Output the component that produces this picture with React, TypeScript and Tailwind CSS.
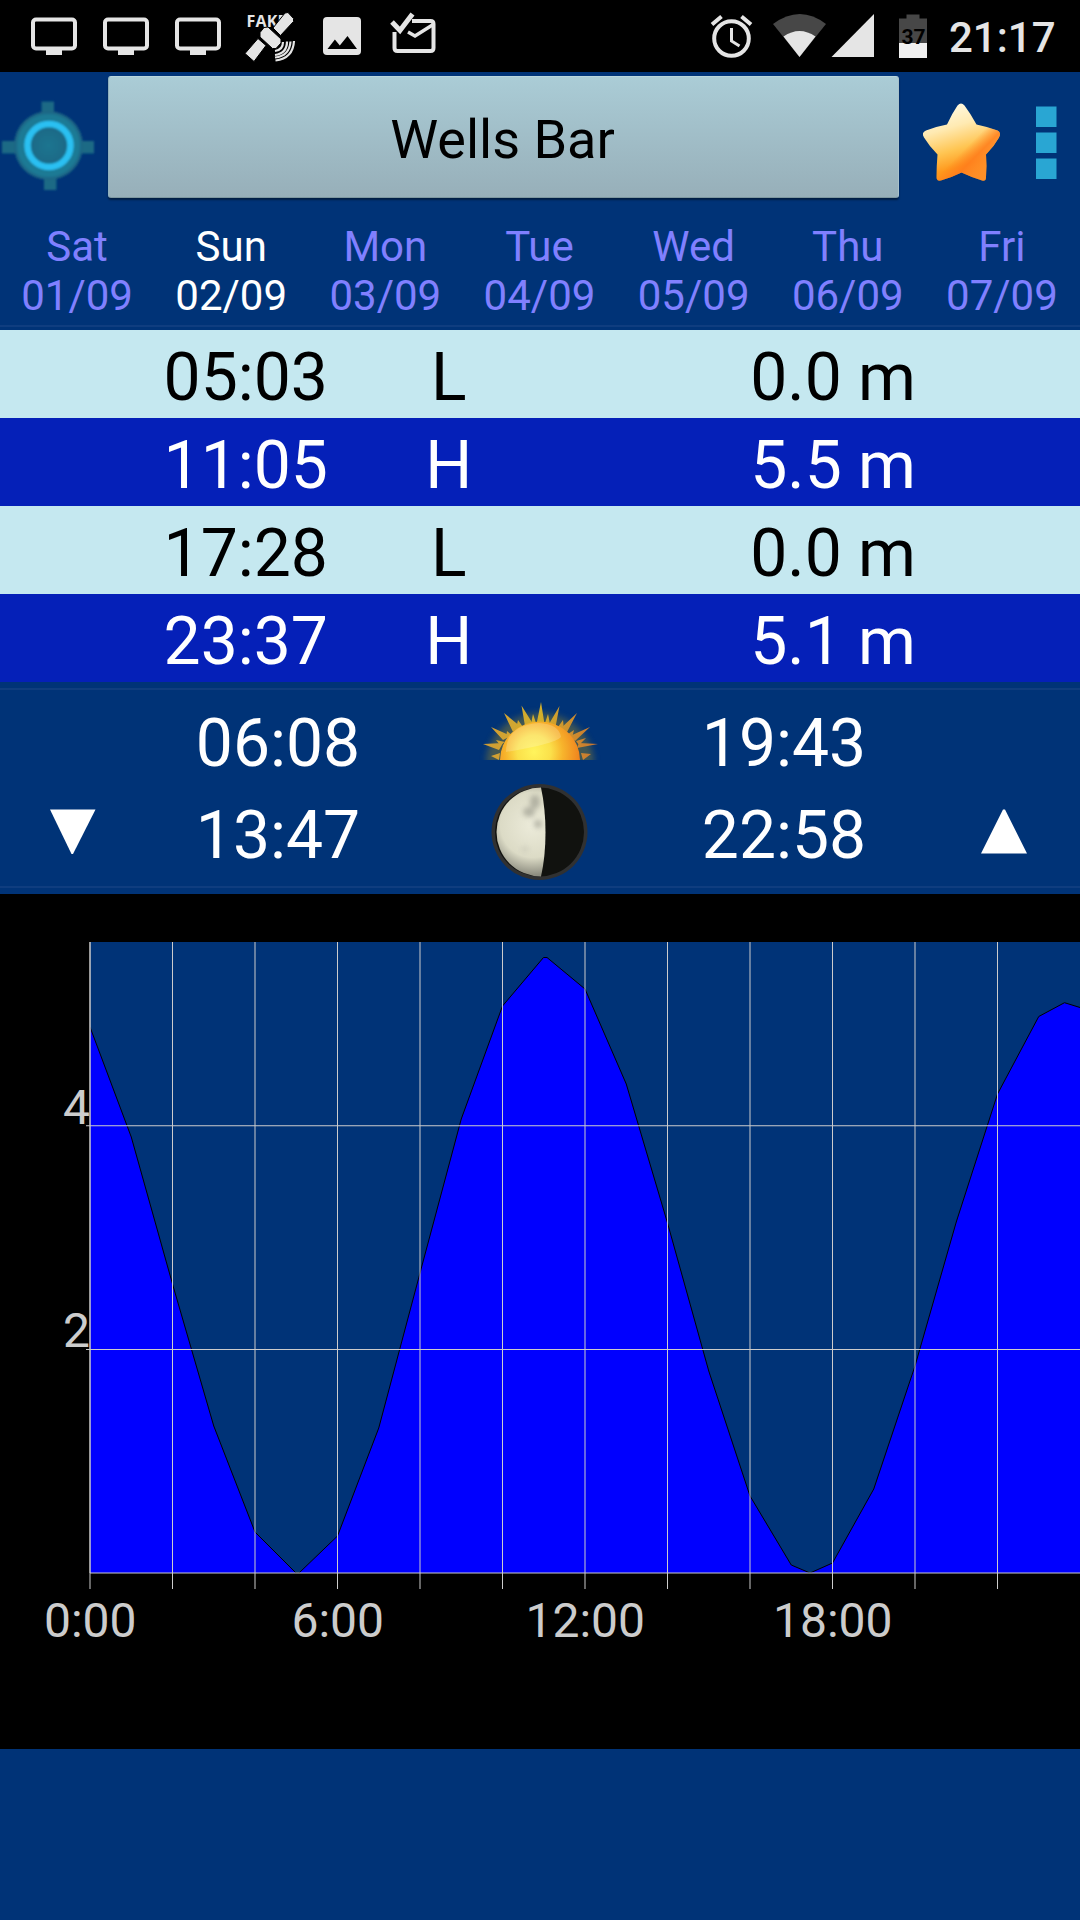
import type { ReactNode } from "react";

interface Day {
  name: string;
  date: string;
}

interface Tide {
  time: string;
  type: "L" | "H";
  height: string;
}

const days: Day[] = [
  { name: "Sat", date: "01/09" },
  { name: "Sun", date: "02/09" },
  { name: "Mon", date: "03/09" },
  { name: "Tue", date: "04/09" },
  { name: "Wed", date: "05/09" },
  { name: "Thu", date: "06/09" },
  { name: "Fri", date: "07/09" },
];

const tides: Tide[] = [
  { time: "05:03", type: "L", height: "0.0 m" },
  { time: "11:05", type: "H", height: "5.5 m" },
  { time: "17:28", type: "L", height: "0.0 m" },
  { time: "23:37", type: "H", height: "5.1 m" },
];

// Tide curve in chart pixels, chart origin is the top left of the black panel
const curve = [
  [90, 133],
  [131.25, 243],
  [172.5, 390],
  [213.75, 532],
  [255, 638],
  [296, 679],
  [299, 679],
  [337.5, 642],
  [378.75, 534],
  [420, 379],
  [461.25, 225],
  [502.5, 112],
  [543.5, 63.5],
  [547, 63.5],
  [585, 95],
  [626.25, 190],
  [667.5, 329],
  [708.75, 477],
  [750, 602],
  [791.25, 671],
  [810, 679],
  [832.5, 669],
  [873.75, 595],
  [915, 472],
  [956.25, 328],
  [997.5, 200],
  [1038.75, 122.5],
  [1064.5, 108.7],
  [1080, 113.5],
];

const StatusIcon = ({ children }: { children: ReactNode }) => (
  <svg width="72" height="72" viewBox="0 0 72 72" fill="none">
    {children}
  </svg>
);

const MonitorIcon = () => (
  <StatusIcon>
    <rect x="15" y="19.5" width="42" height="29" rx="3" stroke="#e5e5e5" strokeWidth="4" />
    <path d="M28 49h16v6H28z" fill="#e5e5e5" />
  </StatusIcon>
);

const SatelliteIcon = () => (
  <StatusIcon>
    <text
      x="12.5"
      y="26.5"
      className="font-['Open_Sans',sans-serif] text-[16px] font-bold"
      textLength="40"
      fill="#e5e5e5"
    >
      FAKE
    </text>
    <g stroke="#000" strokeWidth="1" strokeLinejoin="round" fill="#e5e5e5">
      <path d="M51 13l3-.500 5.500 6v3L46.500 35.500 39 28z" />
      <path d="M24 38.500l8 7L20 61.500 11 53.500z" />
      <path d="M30 27.500l4-.500 13 12v4l-5 5.500h-3.500L26 37v-4.500z" />
    </g>
    <g stroke="#e5e5e5" strokeWidth="2.2">
      <path d="M49 42q0 8-8 9" />
      <path d="M53 41.500q0 12-12 13.500" />
      <path d="M56.500 41.500q-1 14.500-15.500 16" />
      <path d="M60 41q-1 17.500-18.500 19.500" />
    </g>
  </StatusIcon>
);

const PictureIcon = () => (
  <StatusIcon>
    <rect x="17" y="17" width="38" height="38" rx="4" fill="#e5e5e5" />
    <path d="M21.5 49h29.5L41.5 36l-7.7 9.5-4.9-6z" fill="#000" />
  </StatusIcon>
);

const MailCheckIcon = () => (
  <StatusIcon>
    <path
      d="M34 21h18.500q3 0 3 3v24q0 3-3 3h-33q-3 0-3-3V32"
      stroke="#e5e5e5"
      strokeWidth="4"
    />
    <path d="M14 22l8 8.500L34.500 14" stroke="#e5e5e5" strokeWidth="5" />
    <path d="M30 32l7 4L56 24" stroke="#e5e5e5" strokeWidth="3.500" />
  </StatusIcon>
);

const StatusBar = () => (
  <div className="flex h-[72px] bg-black pl-[18px]">
    <MonitorIcon />
    <MonitorIcon />
    <MonitorIcon />
    <SatelliteIcon />
    <PictureIcon />
    <MailCheckIcon />
    <div className="ml-auto flex">
      {/* alarm */}
      <svg width="60" height="72" viewBox="702 0 60 72" fill="none" stroke="#e5e5e5">
        <circle cx="731.5" cy="38.500" r="17.300" strokeWidth="4" />
        <path d="M731.500 28v13l8 5" strokeWidth="3" />
        <path d="M712 24.500l9.500-8M751 24.500l-9.500-8" strokeWidth="4" />
      </svg>
      {/* wifi */}
      <svg width="66" height="72" viewBox="762 0 66 72">
        <path d="M799.500 57L773 24q27-20 53 0z" fill="#474747" />
        <path d="M799.500 57L783.500 36.500q16-11 32 0z" fill="#e5e5e5" />
      </svg>
      {/* mobile signal */}
      <svg width="56" height="72" viewBox="828 0 56 72">
        <path d="M831.500 57L874 14v43z" fill="#e5e5e5" />
      </svg>
      {/* battery */}
      <svg width="60" height="72" viewBox="884 0 60 72">
        <path d="M899 58V18.500h7.500V14.500h13v4H927V58z" fill="#474747" />
        <path d="M899 43h28v15h-28z" fill="#f0f0f0" />
        <text
          x="913.5"
          y="43.7"
          textAnchor="middle"
          className="font-['Roboto',sans-serif] text-[21px] font-bold"
          fill="#000"
        >
          37
        </text>
      </svg>
      <span className="w-[136px] pl-[5px] pt-1 text-[42px] leading-[68px] font-medium text-[#e5e5e5]">
        21:17
      </span>
    </div>
  </div>
);

const Header = () => (
  <div className="flex h-[138px] items-start">
    <svg width="108" height="138" viewBox="0 72 108 138">
      <defs>
        <radialGradient id="disc">
          <stop offset="0" stopColor="#1f7590" />
          <stop offset="0.5" stopColor="#1b6a87" />
          <stop offset="0.85" stopColor="#1f7d97" />
          <stop offset="1" stopColor="#1b5f80" />
        </radialGradient>
        <filter id="ringSoft" x="-10%" y="-10%" width="120%" height="120%">
          <feGaussianBlur stdDeviation="0.8" />
        </filter>
      </defs>
      <g filter="url(#ringSoft)">
        <g fill="#1a6a85">
          <rect x="41.500" y="101.500" width="12.500" height="14" />
          <rect x="44" y="176" width="12.500" height="14" />
          <rect x="2" y="141" width="14" height="12.500" />
          <rect x="81" y="141" width="13" height="12.500" />
        </g>
        <circle cx="48.500" cy="145.500" r="34.500" fill="url(#disc)" />
        <circle cx="49" cy="145.500" r="21.500" fill="none" stroke="#2cc0f2" strokeWidth="6.500" />
      </g>
    </svg>
    <button className="mt-1 h-[122px] w-[791px] rounded-[3px] border border-t-[#b9d6de] border-r-[#a9c1ca] border-b-[#7d979f] border-l-[#8fb0bd] bg-linear-to-b from-[#aaccd6] to-[#97afb9] pt-[5px] pr-[2px] text-[54px] text-black shadow-[0_2px_2px_rgba(0,0,0,0.45)]">
      Wells Bar
    </button>
    <svg width="181" height="138" viewBox="899 72 181 138">
      <defs>
        <linearGradient id="star" x1="0.3" y1="0" x2="0.6" y2="1">
          <stop offset="0" stopColor="#fffbe6" />
          <stop offset="0.3" stopColor="#ffeab2" />
          <stop offset="0.58" stopColor="#ffc552" />
          <stop offset="0.8" stopColor="#ff981c" />
          <stop offset="1" stopColor="#ff8a1a" />
        </linearGradient>
        <linearGradient id="starShade" x1="0.5" y1="0.55" x2="0.9" y2="0.95">
          <stop offset="0.1" stopColor="#ff7a1c" stopOpacity="0" />
          <stop offset="0.4" stopColor="#ff7a1c" stopOpacity="0.8" />
          <stop offset="1" stopColor="#ffa040" stopOpacity="0.3" />
        </linearGradient>
      </defs>
      {["url(#star)", "url(#starShade)"].map((fill) => (
        <path
          key={fill}
          d="M957.500 105.500q3.500-4 7 0 6 8 12 19 10 2 21 6 4 2 1.500 7-5 9-13 17 1 12 0 23 0 4-4 3-10-3-20.500-8-10 5-20.500 8-5 1-4.500-4 0-10 1-22-8-8-13.500-17-3-5 2-7 10-4 21-6 5-11 10.500-19z"
          fill={fill}
        />
      ))}
      <g fill="#29a6d3">
        <rect x="1036" y="106.500" width="20.500" height="20.500" />
        <rect x="1036" y="132.500" width="20.500" height="20.500" />
        <rect x="1036" y="158.500" width="20.500" height="20.500" />
      </g>
    </svg>
  </div>
);

const SunIcon = () => (
  <svg width="124" height="60" viewBox="478 700 124 60">
    <defs>
      <radialGradient id="sun" gradientUnits="userSpaceOnUse" cx="534" cy="752" r="48">
        <stop offset="0" stopColor="#fff45c" />
        <stop offset="0.35" stopColor="#fbe04a" />
        <stop offset="0.6" stopColor="#f7b42c" />
        <stop offset="1" stopColor="#ee7d1c" />
      </radialGradient>
      <linearGradient id="ray" gradientUnits="userSpaceOnUse" x1="480" y1="0" x2="600" y2="0">
        <stop offset="0" stopColor="#cf9a35" />
        <stop offset="0.5" stopColor="#d3b02c" />
        <stop offset="1" stopColor="#c9702f" />
      </linearGradient>
      <filter id="glow" x="-20%" y="-20%" width="140%" height="140%">
        <feGaussianBlur stdDeviation="3" />
      </filter>
      <filter id="raySoft" x="-10%" y="-10%" width="120%" height="120%">
        <feGaussianBlur stdDeviation="0.6" />
      </filter>
    </defs>
    <path d="M486 764a54 51 0 0 1 108 0z" fill="#6f6f3a" opacity="0.6" filter="url(#glow)" />
    <g fill="url(#ray)" filter="url(#raySoft)">
      <path d="M536.500 724L541 702l3.500 22zM525 726l-3.500-20.500L533 724zM549 724l10.500-18-4 21zM513 732l-9-19 17 14zM560 729l17-16-11 21zM503 740l-12-13 20 9zM570 736l20-9-15 14zM499 750l-16-6 20-1zM577 748l21-4-19-1z" />
      <path d="M531 724l2-10 3 9zM545 723l3-9 2 10zM516 729l2-9 5 7zM558 727l5-7 1 10zM506 738l1-7 6 5zM568 734l6-4-2 8zM500 745l-4-5 9 2zM576 741l10-3-7 7zM499 760l-8-4 9-3zM581 753l10 1-8 6z" />
    </g>
    <path d="M500 760a40 38.500 0 0 1 80 0z" fill="url(#sun)" />
    <path d="M506 752q0-27 33-29 20 1 22 14-6 7-55 15z" fill="#fff" opacity="0.2" />
  </svg>
);

const MoonIcon = () => (
  <svg width="98" height="98" viewBox="490 783 98 98">
    <defs>
      <radialGradient id="moon" gradientUnits="userSpaceOnUse" cx="533" cy="825" r="50">
        <stop offset="0" stopColor="#ecebda" />
        <stop offset="0.65" stopColor="#dcdbc6" />
        <stop offset="1" stopColor="#8d8d80" />
      </radialGradient>
      <filter id="soft" x="-50%" y="-50%" width="200%" height="200%">
        <feGaussianBlur stdDeviation="2.8" />
      </filter>
    </defs>
    <circle cx="539.500" cy="832" r="48" fill="#303132" />
    <circle cx="539.500" cy="832" r="44.500" fill="#11120f" />
    <path d="M541 787.500a44.500 44.500 0 0 0 0 89q4.500-20 4.500-44t-4.500-45z" fill="url(#moon)" />
    <g fill="#85857a" opacity="0.5" filter="url(#soft)">
      <ellipse cx="535" cy="802" rx="5" ry="7" />
      <ellipse cx="529" cy="812" rx="6" ry="5" />
      <ellipse cx="538" cy="824" rx="4" ry="4" />
      <ellipse cx="525" cy="849" rx="4" ry="2" opacity="0.4" />
    </g>
  </svg>
);

const SunMoon = () => (
  <div className="h-[212px] pt-[6px]">
    <div className="h-[200px] border-y-2 border-[#0f3d7f]">
      <div className="flex pt-[8px]">
        <span className="ml-[144px] h-[94px] w-[268px] pt-[2px] text-center text-[66px] leading-[88px]">
          06:08
        </span>
        <div className="flex w-[256px] justify-center pt-[2px]">
          <SunIcon />
        </div>
        <span className="h-[92px] w-[232px] pt-[2px] text-center text-[66px] leading-[88px]">
          19:43
        </span>
      </div>
      <div className="flex h-[94px]">
        <svg width="144" height="94" viewBox="0 792 144 94">
          <path d="M50 809.500h45.500L73 854h-1.500z" fill="#fff" />
        </svg>
        <span className="w-[268px] text-center text-[66px] leading-[88px]">13:47</span>
        <div className="-mt-[9px] flex w-[256px] justify-center pr-[3px]">
          <MoonIcon />
        </div>
        <span className="w-[232px] text-center text-[66px] leading-[88px]">22:58</span>
        <svg className="ml-[28px]" width="152" height="94" viewBox="928 792 152 94">
          <path d="M981 853.500h46L1005 809.500h-2z" fill="#fff" />
        </svg>
      </div>
    </div>
  </div>
);

const TideChart = () => {
  const line = curve.map((point) => point.join(",")).join(" ");

  return (
    <svg className="block bg-black" width="1080" height="855" viewBox="0 0 1080 855">
      <rect x="90" y="48" width="990" height="631" fill="#003377" />
      <polygon points={`90,679 ${line} 1080,679`} fill="#0000ff" />
      <polyline points={line} fill="none" stroke="#000" strokeWidth="1" />
      <g stroke="#ccc" strokeWidth="1">
        {Array.from({ length: 12 }, (_, i) => (
          <line key={i} x1={90 + i * 82.5} x2={90 + i * 82.5} y1="48" y2="695" />
        ))}
        <line x1="90" x2="90" y1="48" y2="679" />
        <line x1="90" x2="1080" y1="679" y2="679" />
        <line x1="86" x2="1080" y1="455.5" y2="455.5" />
        <line x1="86" x2="1080" y1="231.75" y2="231.75" />
      </g>
      <g className="font-['Roboto',sans-serif] text-[48px]" fill="#ccc">
        <text x="90" y="230" textAnchor="end">4</text>
        <text x="90" y="453" textAnchor="end">2</text>
        {["0:00", "6:00", "12:00", "18:00"].map((label, i) => (
          <text key={label} x={90.25 + i * 247.5} y="743" textAnchor="middle">
            {label}
          </text>
        ))}
      </g>
    </svg>
  );
};

const App = () => {
  return (
    <div className="h-[1920px] w-[1080px] overflow-hidden bg-[#003377] font-['Roboto',sans-serif] text-white">
      <StatusBar />
      <Header />

      {/* Day picker */}
      <div className="h-[120px] pt-[12px]">
        <div className="h-[105px] border-b-2 border-[#0f3d7f]">
          <div className="grid w-[1079px] grid-cols-7 text-center text-[42px] leading-[49px]">
            {days.map((day) => (
              <div
                key={day.date}
                className={day.name === "Sun" ? "text-white" : "text-[#8080ff]"}
              >
                <p>{day.name}</p>
                <p>{day.date}</p>
              </div>
            ))}
          </div>
        </div>
      </div>

      {/* Tide times */}
      {tides.map((tide) => (
        <div
          key={tide.time}
          className={`flex h-[88px] pt-[4px] text-center text-[66px] leading-[88px] ${
            tide.type === "L" ? "bg-[#c5e8f0] text-black" : "bg-[#0520b8] text-white"
          }`}
        >
          <span className="ml-[146px] w-[200px]">{tide.time}</span>
          <span className="w-[207px]">{tide.type}</span>
          <span className="ml-[34px] w-[495px]">{tide.height}</span>
        </div>
      ))}

      <SunMoon />
      <TideChart />
    </div>
  );
};

export default App;
